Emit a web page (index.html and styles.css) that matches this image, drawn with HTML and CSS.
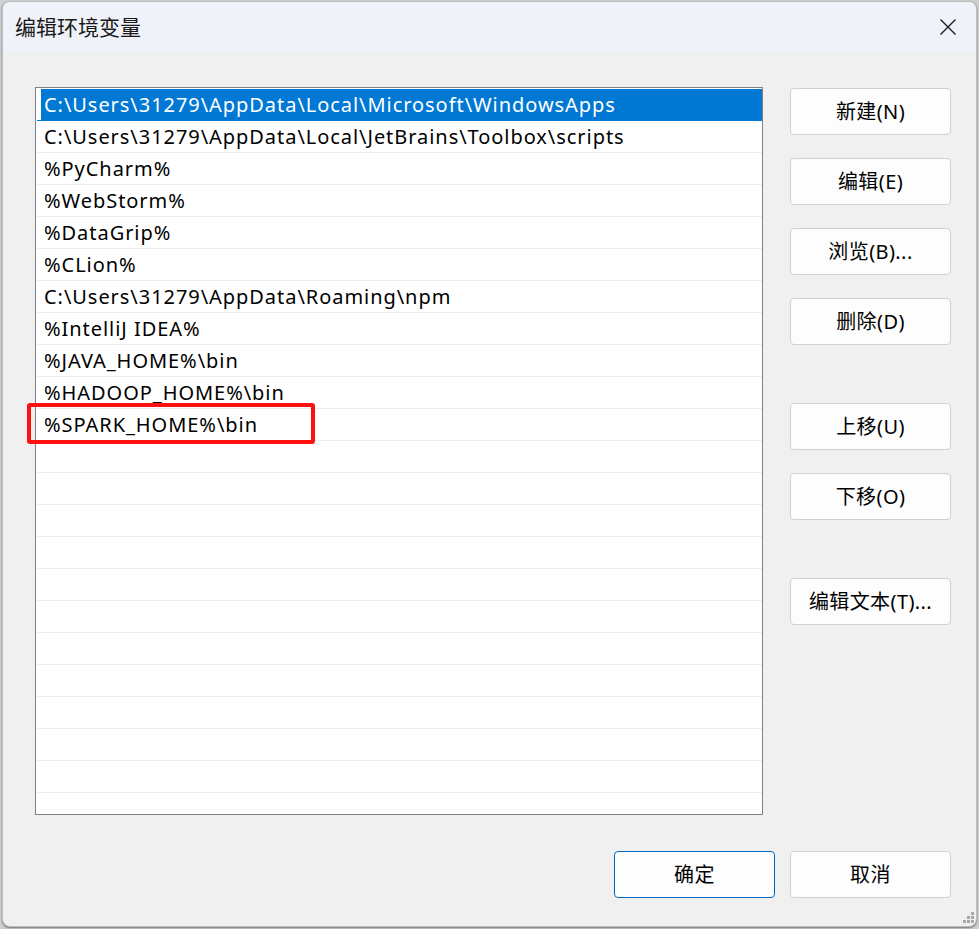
FILE: index.html
```html
<!DOCTYPE html>
<html lang="zh-CN">
<head>
<meta charset="utf-8">
<title>编辑环境变量</title>
<link rel="stylesheet" href="styles.css">
</head>
<body>
<div class="window">
  <div class="titlebar">
    <span class="title">编辑环境变量</span>
    <span class="close" aria-label="关闭">
      <svg width="18" height="18" viewBox="0 0 18 18"><path d="M1.5 1.5 L16.5 16.5 M16.5 1.5 L1.5 16.5" stroke="#1a1a1a" stroke-width="1.4" fill="none"/></svg>
    </span>
  </div>
  <div class="content">
    <div class="listbox">
      <div class="rows">
        <div class="row selected"><span class="cell">C:\Users\31279\AppData\Local\Microsoft\WindowsApps</span></div>
        <div class="row"><span class="cell">C:\Users\31279\AppData\Local\JetBrains\Toolbox\scripts</span></div>
        <div class="row"><span class="cell">%PyCharm%</span></div>
        <div class="row"><span class="cell">%WebStorm%</span></div>
        <div class="row"><span class="cell">%DataGrip%</span></div>
        <div class="row"><span class="cell">%CLion%</span></div>
        <div class="row"><span class="cell">C:\Users\31279\AppData\Roaming\npm</span></div>
        <div class="row"><span class="cell">%IntelliJ IDEA%</span></div>
        <div class="row"><span class="cell">%JAVA_HOME%\bin</span></div>
        <div class="row"><span class="cell">%HADOOP_HOME%\bin</span></div>
        <div class="row"><span class="cell">%SPARK_HOME%\bin</span></div>
        <div class="row"><span class="cell"></span></div>
        <div class="row"><span class="cell"></span></div>
        <div class="row"><span class="cell"></span></div>
        <div class="row"><span class="cell"></span></div>
        <div class="row"><span class="cell"></span></div>
        <div class="row"><span class="cell"></span></div>
        <div class="row"><span class="cell"></span></div>
        <div class="row"><span class="cell"></span></div>
        <div class="row"><span class="cell"></span></div>
        <div class="row"><span class="cell"></span></div>
        <div class="row"><span class="cell"></span></div>
        <div class="row"><span class="cell"></span></div>
      </div>
      <div class="highlight-box"></div>
    </div>
    <div class="side">
      <button class="btn">新建(N)</button>
      <button class="btn">编辑(E)</button>
      <button class="btn">浏览(B)...</button>
      <button class="btn">删除(D)</button>
      <button class="btn group">上移(U)</button>
      <button class="btn">下移(O)</button>
      <button class="btn group">编辑文本(T)...</button>
    </div>
  </div>
  <div class="footer">
    <button class="btn default">确定</button>
    <button class="btn">取消</button>
  </div>
  <div class="grip">
    <i class="d1"></i><i class="d2"></i><i class="d3"></i><i class="d4"></i><i class="d5"></i><i class="d6"></i>
  </div>
</div>
</body>
</html>
```
FILE: styles.css
```css
* { box-sizing: border-box; }
html, body { margin: 0; padding: 0; }
body {
  width: 979px;
  height: 929px;
  background: #cfcfd1;
  font-family: "Noto Sans", "Noto Sans CJK SC", sans-serif;
  overflow: hidden;
}
.window {
  position: relative;
  margin: 1px 0 0 2px;
  width: 975px;
  height: 926px;
  background: #f0f0f0;
  border: 1px solid #bdbdbd;
  border-radius: 8px;
  overflow: hidden;
  box-shadow: 0 1px 2px rgba(0,0,0,0.45);
}
.titlebar {
  height: 51px;
  background: #eff2f8;
  display: flex;
  justify-content: space-between;
  align-items: flex-start;
  padding: 11px 19px 0 12px;
}
.title {
  font-family: "Noto Sans CJK SC", sans-serif;
  font-size: 21px;
  line-height: 26px;
  color: #1a1a1a;
}
.close {
  display: flex;
  margin-top: 5px;
}
.content {
  display: flex;
  align-items: flex-start;
  gap: 27px;
  padding: 34px 0 0 32px;
}
.listbox {
  position: relative;
  width: 728px;
  height: 728px;
  background: #fff;
  border: 1px solid #7f8085;
}
.rows {
  height: 100%;
  padding: 1px 0 0 1px;
  overflow: hidden;
}
.row {
  height: 32px;
  border-bottom: 1px solid #ececec;
}
.cell {
  display: block;
  height: 31px;
  margin-left: 4px;
  padding-left: 3px;
  font-size: 20px;
  letter-spacing: 0.95px;
  line-height: 31px;
  color: #000;
  white-space: nowrap;
}
.row.selected { border-bottom-color: #0078d4; }
.row.selected .cell {
  background: #0078d4;
  color: #fff;
}
.highlight-box {
  position: absolute;
  left: -9px;
  top: 315px;
  width: 288px;
  height: 41px;
  border: 4px solid #ff1010;
  border-radius: 3px;
}
.side {
  display: flex;
  flex-direction: column;
  gap: 23px;
  padding-top: 1px;
}
.side .group { margin-top: 35px; }
.btn {
  width: 161px;
  height: 47px;
  background: #fdfdfd;
  border: 1px solid #d0d0d0;
  border-radius: 4px;
  font-family: "Noto Sans", "Noto Sans CJK SC", sans-serif;
  font-size: 20px;
  letter-spacing: 0.4px;
  color: #000;
  padding: 0;
  line-height: 45px;
}
.btn.default { border-color: #0067c0; }
.footer {
  display: flex;
  justify-content: flex-end;
  gap: 15px;
  padding: 36px 25px 0 0;
}
.grip {
  position: absolute;
  right: 2px;
  bottom: 2px;
  width: 12px;
  height: 12px;
}
.grip i {
  position: absolute;
  width: 3px;
  height: 3px;
  background: #a8a8a8;
}
.grip .d1 { right: 0; top: 0; }
.grip .d2 { right: 4px; top: 4px; }
.grip .d3 { right: 0; top: 4px; }
.grip .d4 { right: 8px; top: 8px; }
.grip .d5 { right: 4px; top: 8px; }
.grip .d6 { right: 0; top: 8px; }
```
